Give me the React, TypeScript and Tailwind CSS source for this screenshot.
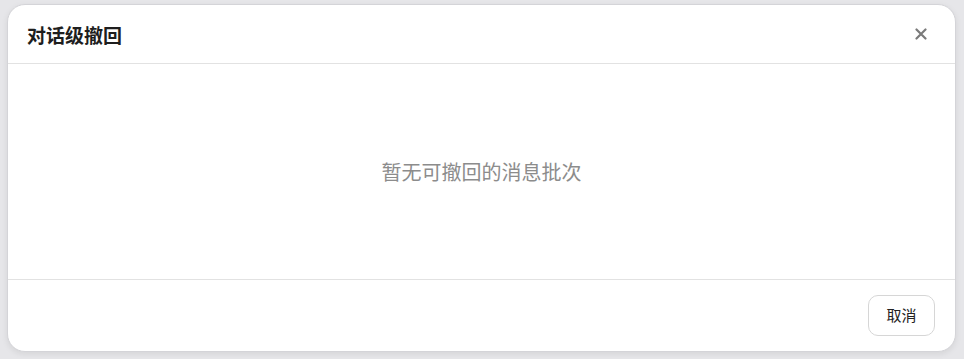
import React from "react";

export default function App() {
  return (
    <div
      className="w-[964px] h-[359px] bg-[#e6e6e9] pt-[4px] pl-[7px] overflow-hidden"
      style={{ fontFamily: '"Noto Sans CJK SC", "Noto Sans", sans-serif' }}
    >
      <div className="w-[949px] h-[348px] bg-white rounded-[18px] border border-[#d4d4d8] shadow-[0_2px_6px_rgba(0,0,0,0.08)] flex flex-col overflow-hidden">
        <div className="h-[59px] flex items-center justify-between pl-[19px] pr-[27px] border-b border-[#e2e2e2] shrink-0">
          <h2 className="text-[19px] font-bold text-[#1e1e1e] leading-none">对话级撤回</h2>
          <button className="w-[14px] h-[14px] flex items-center justify-center text-[#7a7a7a]">
            <svg width="12" height="12" viewBox="0 0 12 12" fill="none" stroke="currentColor" strokeWidth="2.2" strokeLinecap="round">
              <path d="M1.5 1.5 L10.5 10.5 M10.5 1.5 L1.5 10.5" />
            </svg>
          </button>
        </div>
        <div className="h-[216px] flex items-center justify-center border-b border-[#e2e2e2] shrink-0">
          <p className="text-[20px] text-[#8c8c8c]">暂无可撤回的消息批次</p>
        </div>
        <div className="flex-1 flex items-center justify-end pr-[20px]">
          <button className="w-[67px] h-[41px] rounded-[10px] border border-[#d6d6d6] bg-white text-[15px] text-[#222] flex items-center justify-center">
            取消
          </button>
        </div>
      </div>
    </div>
  );
}
